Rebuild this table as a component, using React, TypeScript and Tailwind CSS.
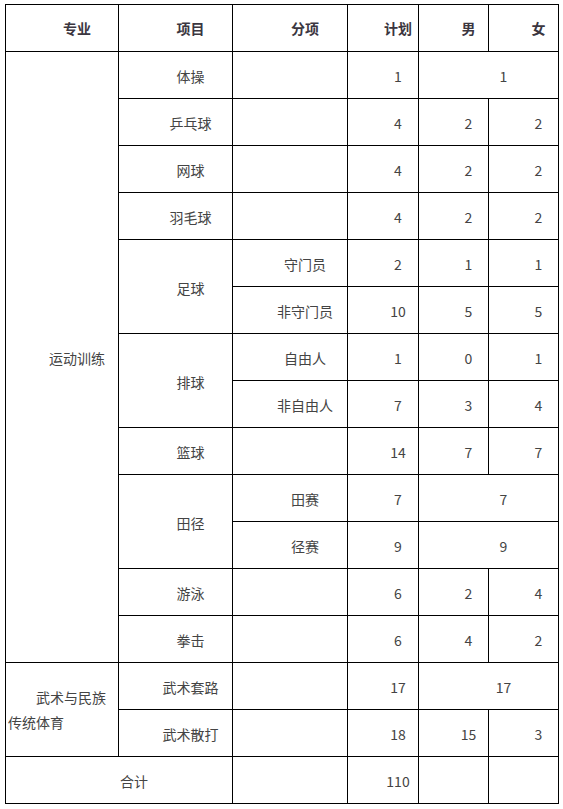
const font = { fontFamily: '"Noto Sans CJK SC", "Noto Sans", sans-serif' };

type Cell = {
  text?: string;
  rowSpan?: number;
  colSpan?: number;
  wrap?: boolean;
};

const rows: Cell[][] = [
  [{ text: "运动训练", rowSpan: 13 }, { text: "体操" }, {}, { text: "1" }, { text: "1", colSpan: 2 }],
  [{ text: "乒乓球" }, {}, { text: "4" }, { text: "2" }, { text: "2" }],
  [{ text: "网球" }, {}, { text: "4" }, { text: "2" }, { text: "2" }],
  [{ text: "羽毛球" }, {}, { text: "4" }, { text: "2" }, { text: "2" }],
  [{ text: "足球", rowSpan: 2 }, { text: "守门员" }, { text: "2" }, { text: "1" }, { text: "1" }],
  [{ text: "非守门员" }, { text: "10" }, { text: "5" }, { text: "5" }],
  [{ text: "排球", rowSpan: 2 }, { text: "自由人" }, { text: "1" }, { text: "0" }, { text: "1" }],
  [{ text: "非自由人" }, { text: "7" }, { text: "3" }, { text: "4" }],
  [{ text: "篮球" }, {}, { text: "14" }, { text: "7" }, { text: "7" }],
  [{ text: "田径", rowSpan: 2 }, { text: "田赛" }, { text: "7" }, { text: "7", colSpan: 2 }],
  [{ text: "径赛" }, { text: "9" }, { text: "9", colSpan: 2 }],
  [{ text: "游泳" }, {}, { text: "6" }, { text: "2" }, { text: "4" }],
  [{ text: "拳击" }, {}, { text: "6" }, { text: "4" }, { text: "2" }],
  [{ text: "武术与民族传统体育", rowSpan: 2, wrap: true }, { text: "武术套路" }, {}, { text: "17" }, { text: "17", colSpan: 2 }],
  [{ text: "武术散打" }, {}, { text: "18" }, { text: "15" }, { text: "3" }],
  [{ text: "合计", colSpan: 2 }, {}, { text: "110" }, {}, {}],
];

const headers = ["专业", "项目", "分项", "计划", "男", "女"];

export default function App() {
  return (
    <div className="min-h-[809px] w-[563px] bg-white pl-[5px] pt-[4px]" style={font}>
      <table className="w-[553px] table-fixed border-collapse text-[14px]">
        <colgroup>
          <col className="w-[113px]" />
          <col className="w-[114px]" />
          <col className="w-[115px]" />
          <col className="w-[71px]" />
          <col className="w-[70px]" />
          <col className="w-[70px]" />
        </colgroup>
        <thead>
          <tr className="h-[47px]">
            {headers.map((h) => (
              <th
                key={h}
                className="border border-black pl-[30px] text-center align-middle font-bold text-[#3b3640]"
              >
                {h}
              </th>
            ))}
          </tr>
        </thead>
        <tbody>
          {rows.map((row, i) => (
            <tr key={i} className="h-[47px]">
              {row.map((c, j) =>
                c.wrap ? (
                  <td
                    key={j}
                    rowSpan={c.rowSpan}
                    colSpan={c.colSpan}
                    className="border border-black px-[2px] text-left align-middle indent-[28px] leading-[25px] text-[#444]"
                  >
                    {c.text}
                  </td>
                ) : (
                  <td
                    key={j}
                    rowSpan={c.rowSpan}
                    colSpan={c.colSpan}
                    className="border border-black pl-[30px] pt-[3px] text-center align-middle text-[#444]"
                  >
                    {c.text}
                  </td>
                )
              )}
            </tr>
          ))}
        </tbody>
      </table>
    </div>
  );
}
